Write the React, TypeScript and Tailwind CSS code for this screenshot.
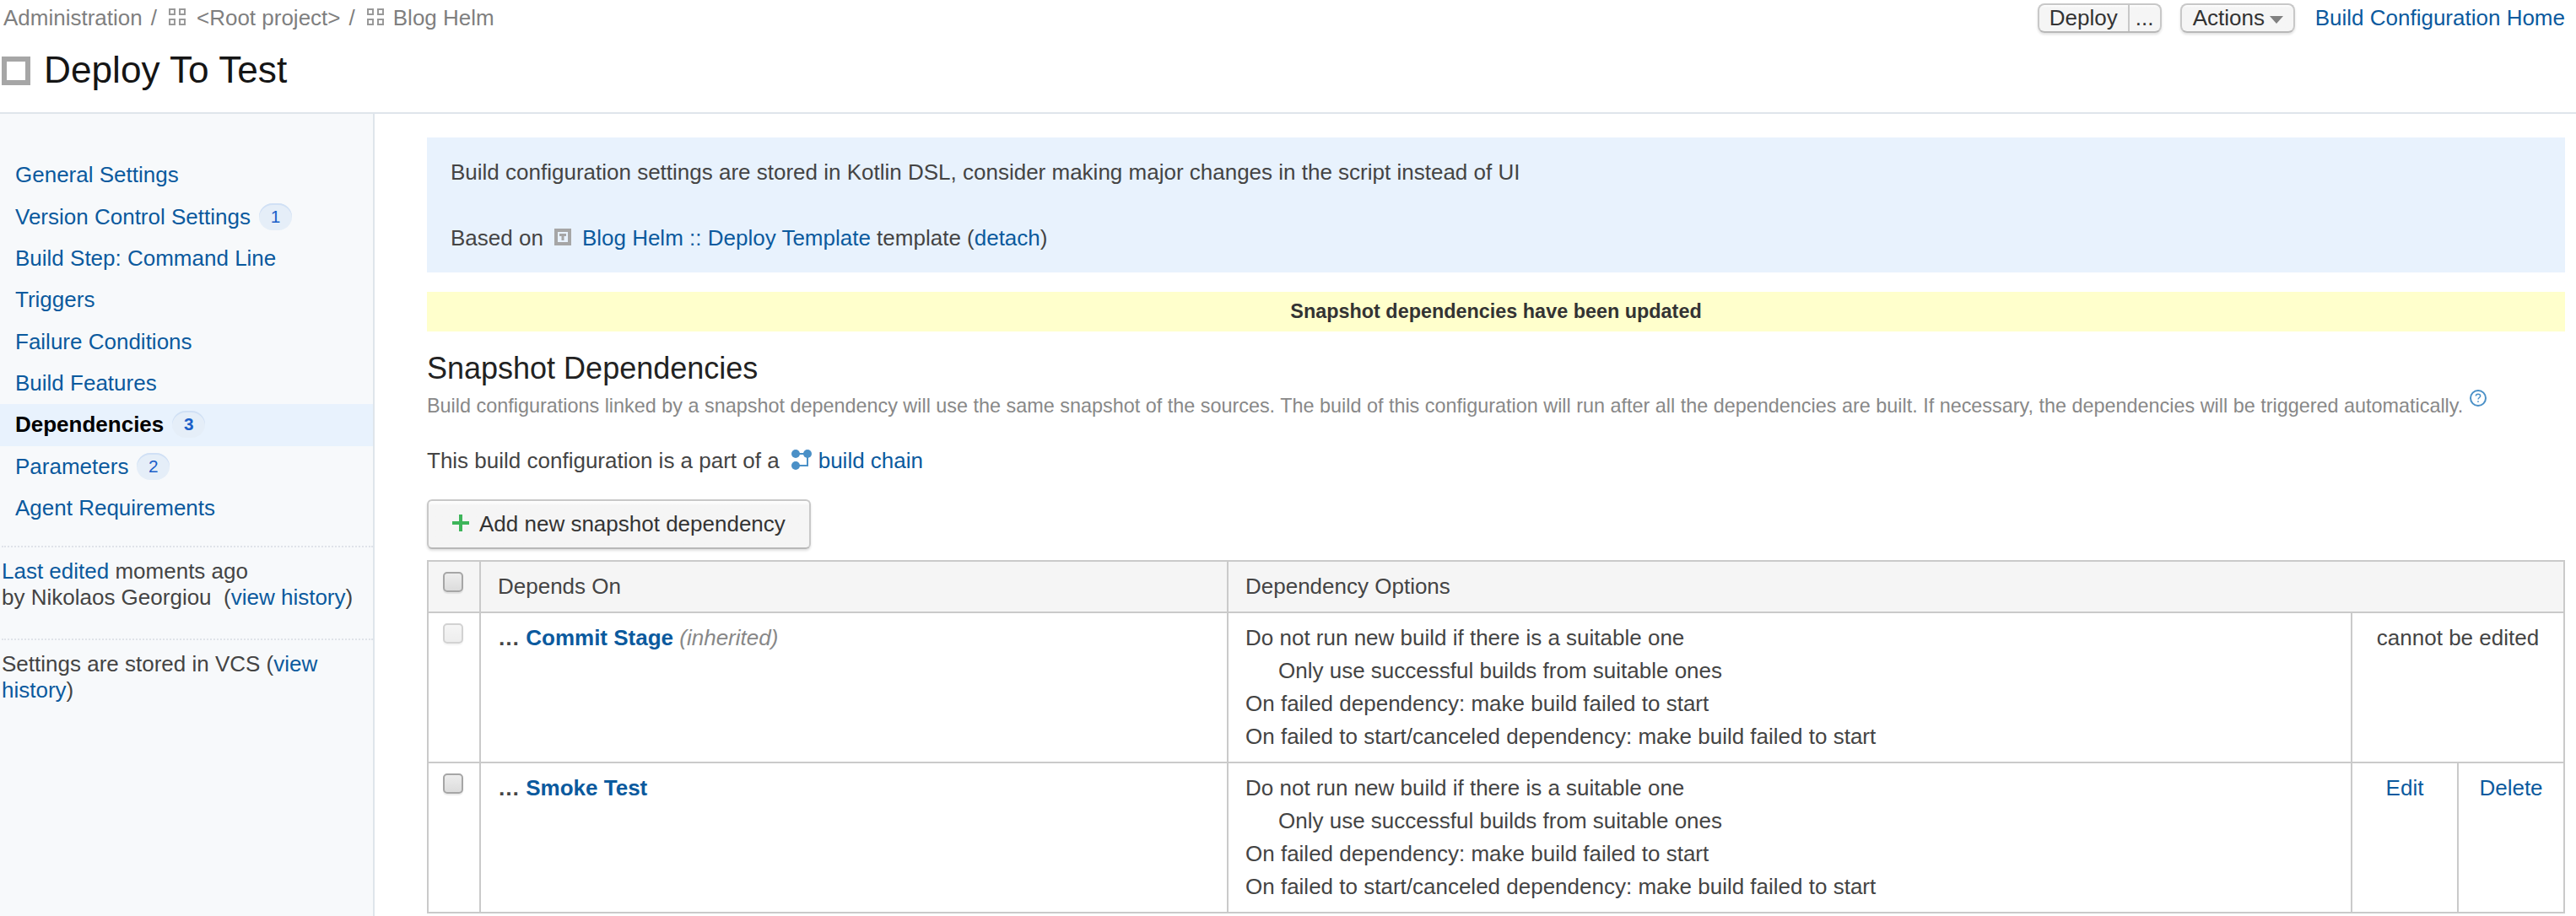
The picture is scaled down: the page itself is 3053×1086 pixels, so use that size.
import type { ReactNode } from "react";

function A({ children }: { children: ReactNode }) {
  return <a className="text-[#0b5a9e]">{children}</a>;
}

function ProjectIcon() {
  return (
    <svg width="20" height="20" viewBox="0 0 20 20" fill="none" stroke="#999" strokeWidth="2" className="shrink-0">
      <rect x="1" y="1" width="6" height="6" />
      <rect x="13" y="1" width="6" height="6" />
      <rect x="1" y="13" width="6" height="6" />
      <rect x="13" y="13" width="6" height="6" />
    </svg>
  );
}

const nav: { label: string; badge?: string; active?: boolean; h: string }[] = [
  { label: "General Settings", h: "h-[50px]" },
  { label: "Version Control Settings", badge: "1", h: "h-[49px]" },
  { label: "Build Step: Command Line", h: "h-[49px]" },
  { label: "Triggers", h: "h-[50px]" },
  { label: "Failure Conditions", h: "h-[49px]" },
  { label: "Build Features", h: "h-[49px]" },
  { label: "Dependencies", badge: "3", active: true, h: "h-[50px]" },
  { label: "Parameters", badge: "2", h: "h-[49px]" },
  { label: "Agent Requirements", h: "h-[49px]" },
];

function Checkbox({ disabled = false }: { disabled?: boolean }) {
  return (
    <div
      className={
        "h-6 w-6 rounded-[5px] border-2 border-[#a6a6a6] bg-linear-to-b from-[#ededed] to-[#dcdcdc] shadow-[0_2px_1px_rgba(0,0,0,0.08)] " +
        (disabled ? "opacity-50" : "")
      }
    />
  );
}

function Options() {
  return (
    <div className="border-l-2 border-[#cacaca] pl-5 pt-[10px] leading-[39px]">
      <div>Do not run new build if there is a suitable one</div>
      <div className="pl-[39px]">Only use successful builds from suitable ones</div>
      <div>On failed dependency: make build failed to start</div>
      <div>On failed to start/canceled dependency: make build failed to start</div>
    </div>
  );
}

const button =
  "flex border-2 border-[#c8c8c8] border-b-[#b8b8b8] bg-linear-to-b from-white from-0% via-[#f5f5f5] via-10% to-[#f5f5f5] text-[#333] shadow-[0_2px_3px_rgba(0,0,0,0.12)]";

export default function App() {
  return (
    <div className="flex h-[1086px] w-[3053px] flex-col overflow-hidden bg-white font-['Liberation_Sans',Arial,sans-serif] text-[26px] leading-[30px] text-[#444]">
      <header className="h-[135px] border-b-2 border-[#dfe5eb]">
        <div className="flex h-[44px] items-start justify-between pr-[13px]">
          <div className="flex pl-1 pt-1.5 text-[#7f7f7f]">
            <span>Administration</span>
            <span className="ml-[10px] mr-[14px]">/</span>
            <span className="mr-[13px] pt-1"><ProjectIcon /></span>
            <span>&lt;Root project&gt;</span>
            <span className="ml-[10px] mr-[14px]">/</span>
            <span className="mr-[11px] pt-1"><ProjectIcon /></span>
            <span>Blog Helm</span>
          </div>
          <div className="flex">
            <div className={button + " mt-1 h-[35px] w-[147px] rounded-[8px]"}>
              <span className="w-[105px] pl-[12px]">Deploy</span>
              <span className="flex-1 border-l-2 border-[#c8c8c8] pl-[7px]">...</span>
            </div>
            <div className={button + " ml-[22px] mt-1 h-[35px] w-[136px] rounded-[8px]"}>
              <span className="pl-[13px]">Actions</span>
              <svg width="16" height="9" viewBox="0 0 16 9" className="ml-[6px] mt-[13px]">
                <path d="M0 0h16L8 9z" fill="#808080" />
              </svg>
            </div>
            <span className="ml-[24px] mt-1.5"><A>Build Configuration Home</A></span>
          </div>
        </div>
        <div className="flex pl-0.5 pt-[13px]">
          <span className="mt-[10px] h-[34px] w-[34px] border-[6px] border-[#a6a6a6]" />
          <h1 className="ml-[16px] mt-px text-[44.2px] leading-[50px] text-[#151515]">Deploy To Test</h1>
        </div>
      </header>
      <div className="flex flex-1">
        <aside className="w-[444px] shrink-0 border-r-2 border-[#dfe5eb] bg-[#f7f9fb] pt-[48px]">
          <nav>
            {nav.map((n) => (
              <div
                key={n.label}
                className={
                  n.h +
                  " flex pl-[18px] pt-[9px] " +
                  (n.active ? "bg-[#e8f2fd] font-bold text-black" : "text-[#0b5a9e]")
                }
              >
                <span>{n.label}</span>
                {n.badge && (
                  <span className="-mt-px ml-[10px] h-8 w-[39px] rounded-full bg-[#e5eef8] text-center text-[20.8px] leading-8 text-[#1a5fc8] shadow-[inset_0_2px_0_#d0e0f5]">
                    {n.badge}
                  </span>
                )}
              </div>
            ))}
          </nav>
          <div className="ml-0.5 mt-[20px] h-[110px] border-t-2 border-dotted border-[#dfe3e9] pt-[13px] leading-[31px]">
            <div><A>Last edited</A> moments ago</div>
            <div>by Nikolaos Georgiou &nbsp;(<A>view history</A>)</div>
          </div>
          <div className="ml-0.5 border-t-2 border-dotted border-[#dfe3e9] pt-[13px] leading-[31px]">
            <div>Settings are stored in VCS (<A>view</A></div>
            <div><A>history</A>)</div>
          </div>
        </aside>
        <main className="ml-[62px] mr-[13px] flex-1 pt-[28px]">
          <section className="h-[160px] bg-[#e8f2fd] pl-[28px] pt-[26px]">
            <div>Build configuration settings are stored in Kotlin DSL, consider making major changes in the script instead of UI</div>
            <div className="mt-[48px] flex">
              <span>Based on</span>
              <svg width="20" height="20" viewBox="0 0 20 20" className="ml-[13px] mt-1">
                <rect width="20" height="20" fill="#a6a6a6" />
                <rect x="4" y="4" width="12" height="12" fill="#e8f2fd" />
                <path d="M6 7.5h8M10 7v7" fill="none" stroke="#a6a6a6" strokeWidth="3" />
              </svg>
              <span className="ml-[13px]"><A>Blog Helm :: Deploy Template</A> template (<A>detach</A>)</span>
            </div>
          </section>
          <div className="mt-[23px] h-[47px] bg-[#ffffcc] text-center text-[23.4px] font-bold leading-[46px] text-[#333]">
            Snapshot dependencies have been updated
          </div>
          <h2 className="mt-[23px] text-[36px] leading-[42px] text-[#222]">Snapshot Dependencies</h2>
          <div className="mt-[8px] flex text-[23.4px] text-[#888]">
            <span>Build configurations linked by a snapshot dependency will use the same snapshot of the sources. The build of this configuration will run after all the dependencies are built. If necessary, the dependencies will be triggered automatically.</span>
            <svg width="20" height="20" viewBox="0 0 20 20" fill="none" stroke="#4a90c7" className="ml-[8px] -mt-1">
              <circle cx="10" cy="10" r="9" strokeWidth="2" />
              <path d="M7.3 7.6c0-1.6 1.2-2.4 2.7-2.4s2.7.8 2.7 2.2c0 1.7-2.7 2-2.7 4.2M10 13.2v1.8" strokeWidth="1.4" />
            </svg>
          </div>
          <div className="mt-[35px] flex">
            <span>This build configuration is a part of a</span>
            <svg width="24" height="24" viewBox="0 0 24 24" className="ml-[14px] mt-0.5">
              <path d="M5 5h14v14H5" fill="none" stroke="#4a90c7" strokeWidth="2" />
              <circle cx="5" cy="5" r="5" fill="#4a90c7" />
              <circle cx="19" cy="5" r="5" fill="#4a90c7" />
              <circle cx="5" cy="19" r="5" fill="#4a90c7" />
            </svg>
            <span className="ml-[8px]"><A>build chain</A></span>
          </div>
          <div className={button + " mt-[31px] h-[59px] w-[455px] rounded-[6px] pl-[28px] pt-[12px]"}>
            <svg width="20" height="20" viewBox="0 0 20 20" className="mt-1">
              <path d="M10 0v20M0 10h20" stroke="#3eb55a" strokeWidth="4" />
            </svg>
            <span className="ml-[12px]">Add new snapshot dependency</span>
          </div>
          <div className="mt-[13px] w-[2534px] border-2 border-b-0 border-[#cacaca]">
            <div className="grid h-[61px] grid-cols-[60px_886px_1584px] border-b-2 border-[#cacaca] bg-[#f5f5f5]">
              <div className="pl-[17px] pt-3"><Checkbox /></div>
              <div className="border-l-2 border-[#cacaca] pl-5 pt-[14px]">Depends On</div>
              <div className="border-l-2 border-[#cacaca] pl-5 pt-[14px]">Dependency Options</div>
            </div>
            <div className="grid h-[178px] grid-cols-[60px_886px_1332px_252px] border-b-2 border-[#cacaca]">
              <div className="pl-[17px] pt-3"><Checkbox disabled /></div>
              <div className="border-l-2 border-[#cacaca] pl-5 pt-[10px] leading-[39px]">
                <b>… <A>Commit Stage</A></b> <i className="text-[#888]">(inherited)</i>
              </div>
              <Options />
              <div className="border-l-2 border-[#cacaca] pt-[10px] text-center leading-[39px]">cannot be edited</div>
            </div>
            <div className="grid h-[178px] grid-cols-[60px_886px_1332px_126px_126px] border-b-2 border-[#cacaca]">
              <div className="pl-[17px] pt-3"><Checkbox /></div>
              <div className="border-l-2 border-[#cacaca] pl-5 pt-[10px] leading-[39px]">
                <b>… <A>Smoke Test</A></b>
              </div>
              <Options />
              <div className="border-l-2 border-[#cacaca] pt-[10px] text-center leading-[39px]"><A>Edit</A></div>
              <div className="border-l-2 border-[#cacaca] pt-[10px] text-center leading-[39px]"><A>Delete</A></div>
            </div>
          </div>
        </main>
      </div>
    </div>
  );
}
